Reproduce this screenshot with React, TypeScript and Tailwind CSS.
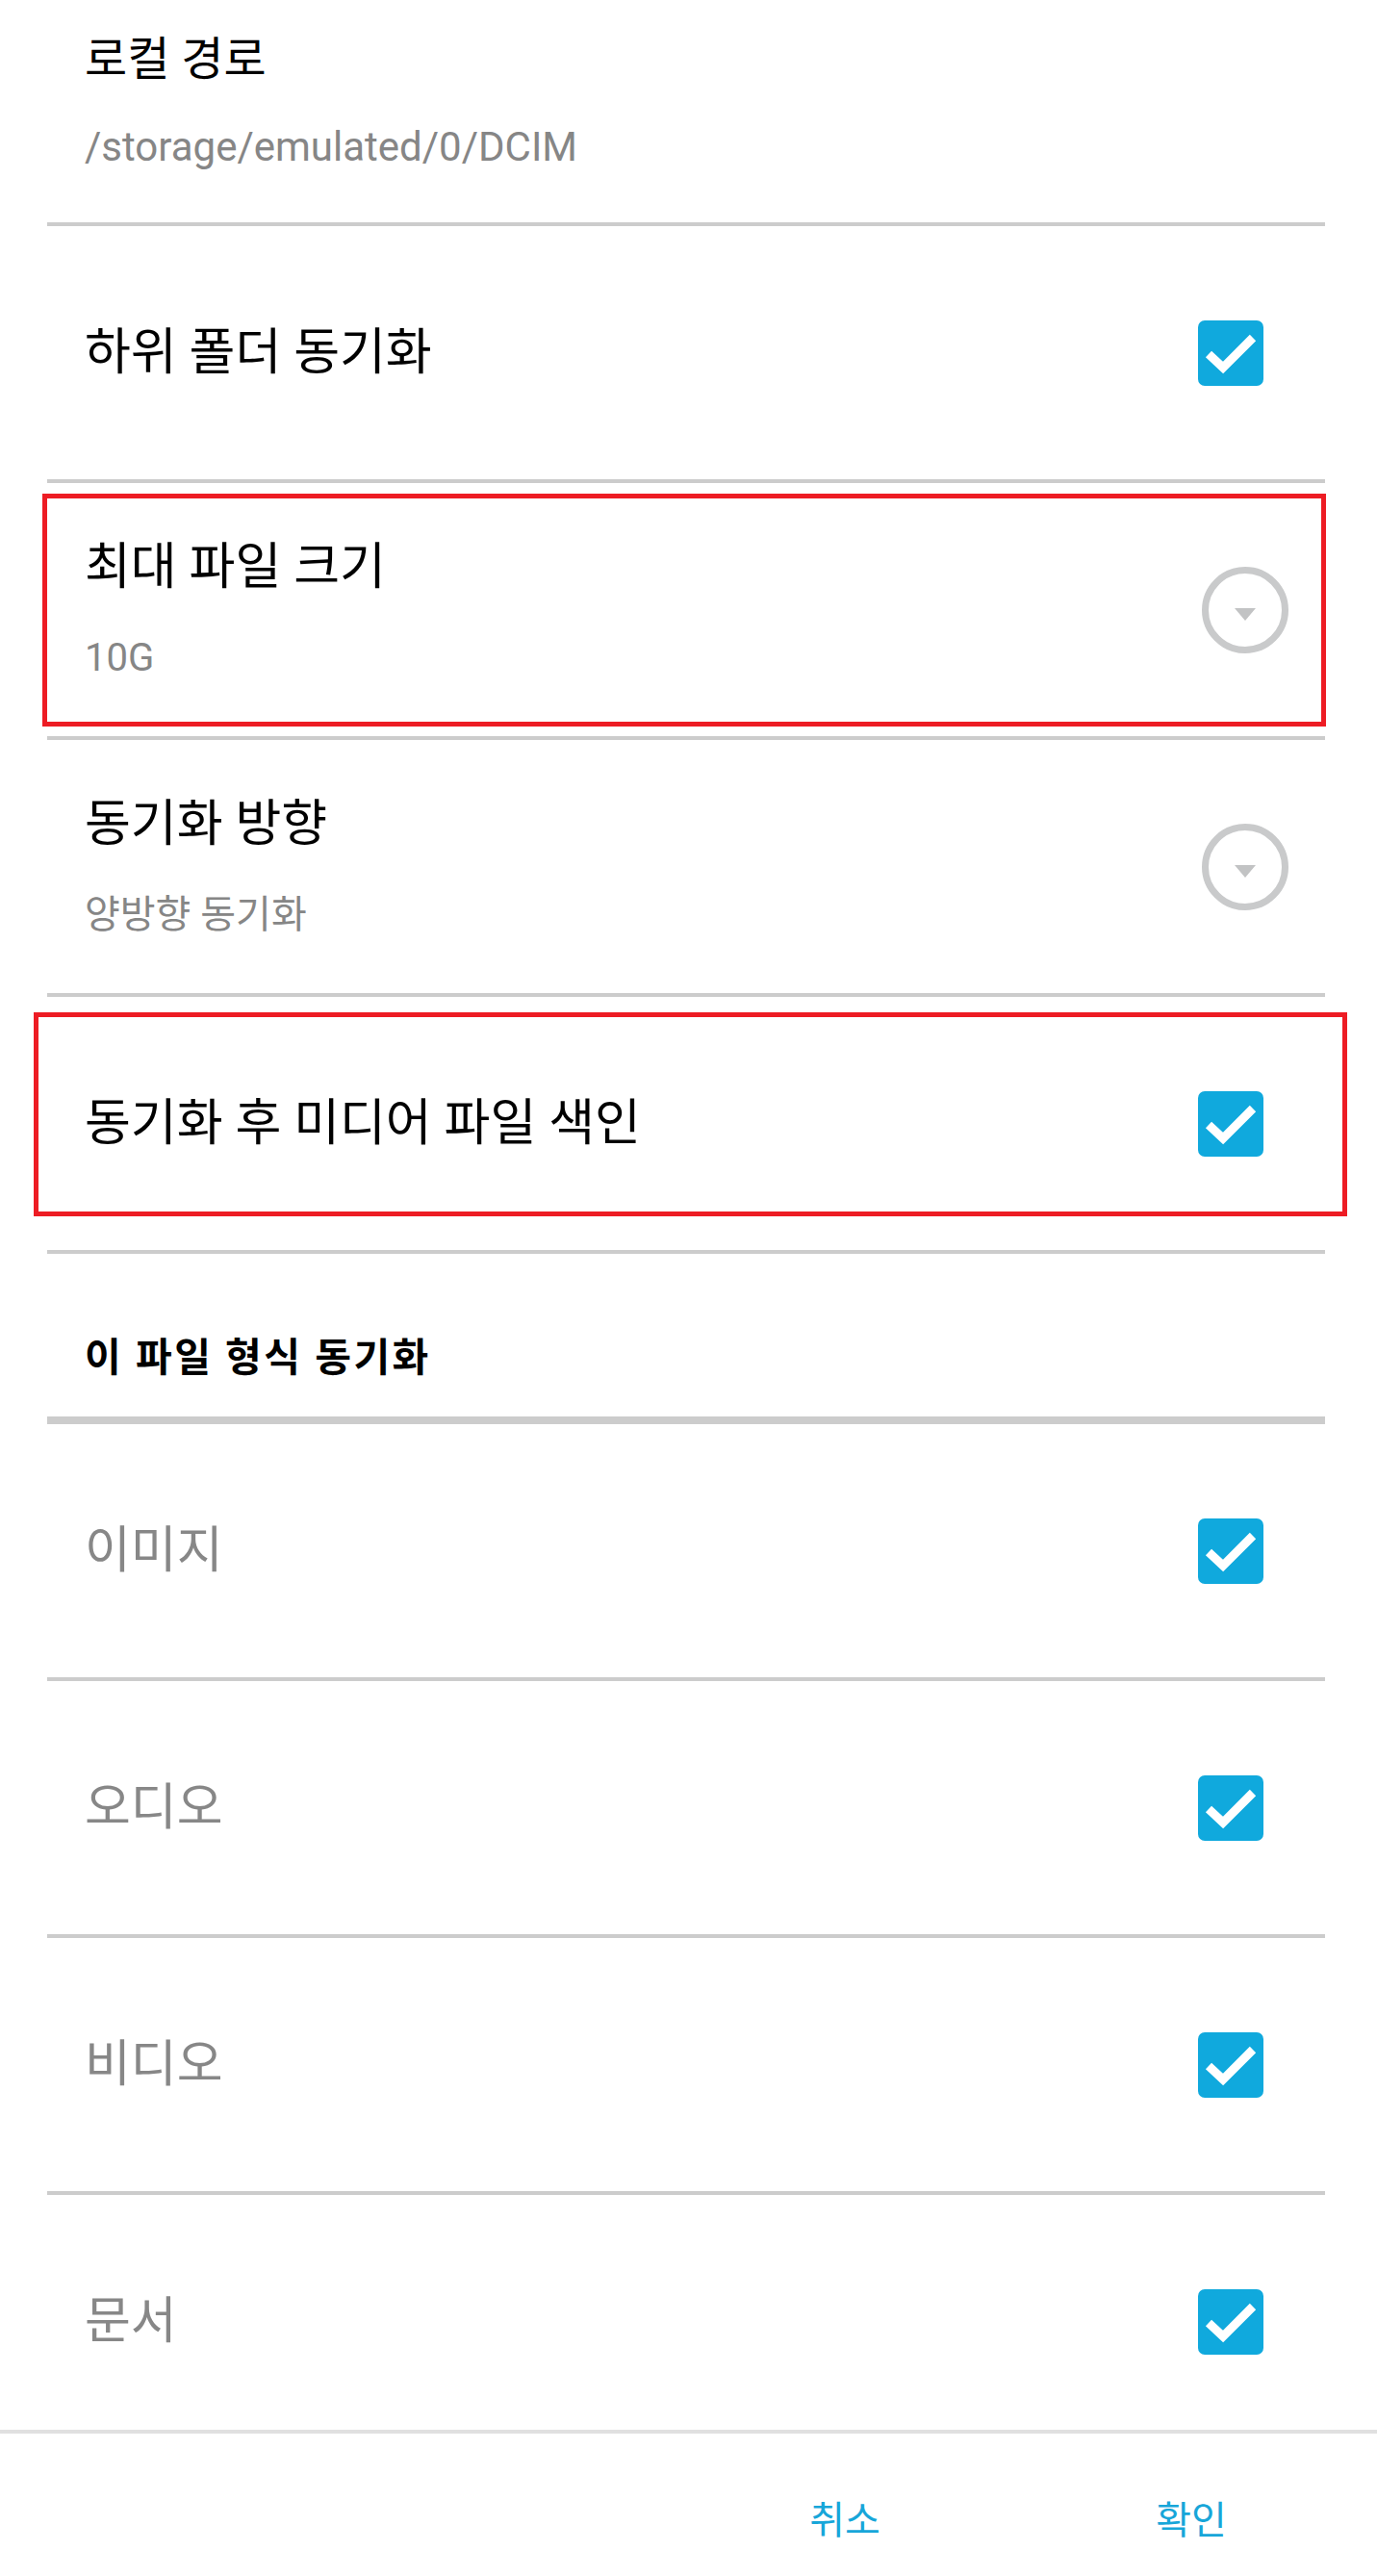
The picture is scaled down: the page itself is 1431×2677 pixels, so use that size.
import React from 'react';

const Divider = () => <div className="h-[4px] bg-[#cccccc] ml-[49px] mr-[54px]" />;

const CheckBox = () => (
    <svg width="68" height="68" viewBox="0 0 68 68" className="shrink-0">
        <rect x="0" y="0" width="68" height="68" rx="7" fill="#10a9dd" />
        <polyline points="11,35 26,49 57,18" fill="none" stroke="#ffffff" strokeWidth="9" />
    </svg>
);

const DropDown = () => (
    <svg width="90" height="90" viewBox="0 0 90 90" className="shrink-0">
        <circle cx="45" cy="45" r="41.5" fill="none" stroke="#c9cacb" strokeWidth="7" />
        <polygon points="34,43 56,43 45,56" fill="#c2c3c4" />
    </svg>
);

const CheckRow = ({ title, gray, marked }: { title: string; gray?: boolean; marked?: string }) => (
    <div className="relative h-[263px] flex items-center justify-between pl-[88px] pr-[118px]">
        <span className={`text-[52px] leading-[60px] ${gray ? 'text-[#878787]' : 'text-black'}`}>{title}</span>
        <CheckBox />
        {marked && <div className={marked} />}
    </div>
);

const SelectRow = ({ title, value, marked }: { title: string; value: string; marked?: string }) => (
    <div className="relative h-[263px] flex items-center justify-between pl-[88px] pr-[92px]">
        <div className="flex flex-col gap-[40px]">
            <span className="text-[52px] leading-[60px] text-black">{title}</span>
            <span className="text-[40px] leading-[48px] text-[#868686]">{value}</span>
        </div>
        <DropDown />
        {marked && <div className={marked} />}
    </div>
);

export default function App() {
    return (
        <div className="h-[2677px] w-full bg-white flex flex-col font-['Roboto','Noto_Sans_CJK_KR',sans-serif]">
            <div className="h-[2525px] shrink-0 overflow-hidden">
                {/* Local path (partially scrolled) */}
                <div className="h-[231px] pl-[88px] pt-[34px] flex flex-col gap-[39px]">
                    <span className="text-[48px] leading-[56px] text-black">로컬 경로</span>
                    <span className="text-[42px] leading-[48px] text-[#868686]">/storage/emulated/0/DCIM</span>
                </div>
                <Divider />
                <CheckRow title="하위 폴더 동기화" />
                <Divider />
                <SelectRow
                    title="최대 파일 크기"
                    value="10G"
                    marked="absolute top-[11px] bottom-[10px] left-[44px] right-[53px] border-[5px] border-[#ed1c24] pointer-events-none"
                />
                <Divider />
                <SelectRow title="동기화 방향" value="양방향 동기화" />
                <Divider />
                <CheckRow
                    title="동기화 후 미디어 파일 색인"
                    marked="absolute top-[16px] bottom-[35px] left-[35px] right-[31px] border-[5px] border-[#ed1c24] pointer-events-none"
                />
                <Divider />
                <div className="h-[169px] pl-[88px] pt-[84px]">
                    <span className="text-[41px] leading-[48px] font-bold text-black tracking-[2.5px]">이 파일 형식 동기화</span>
                </div>
                <div className="h-[8px] bg-[#cccccc] ml-[49px] mr-[54px]" />
                <CheckRow title="이미지" gray />
                <Divider />
                <CheckRow title="오디오" gray />
                <Divider />
                <CheckRow title="비디오" gray />
                <Divider />
                <CheckRow title="문서" gray />
            </div>
            <div className="h-[4px] shrink-0 bg-[#e0e0e0]" />
            <div className="flex-1 flex justify-end items-start pt-[67px] pr-[93px] gap-[160px]">
                <button className="w-[200px] text-center text-[40px] leading-[48px] text-[#17a6d9]">취소</button>
                <button className="w-[200px] text-center text-[40px] leading-[48px] text-[#17a6d9]">확인</button>
            </div>
        </div>
    );
}
